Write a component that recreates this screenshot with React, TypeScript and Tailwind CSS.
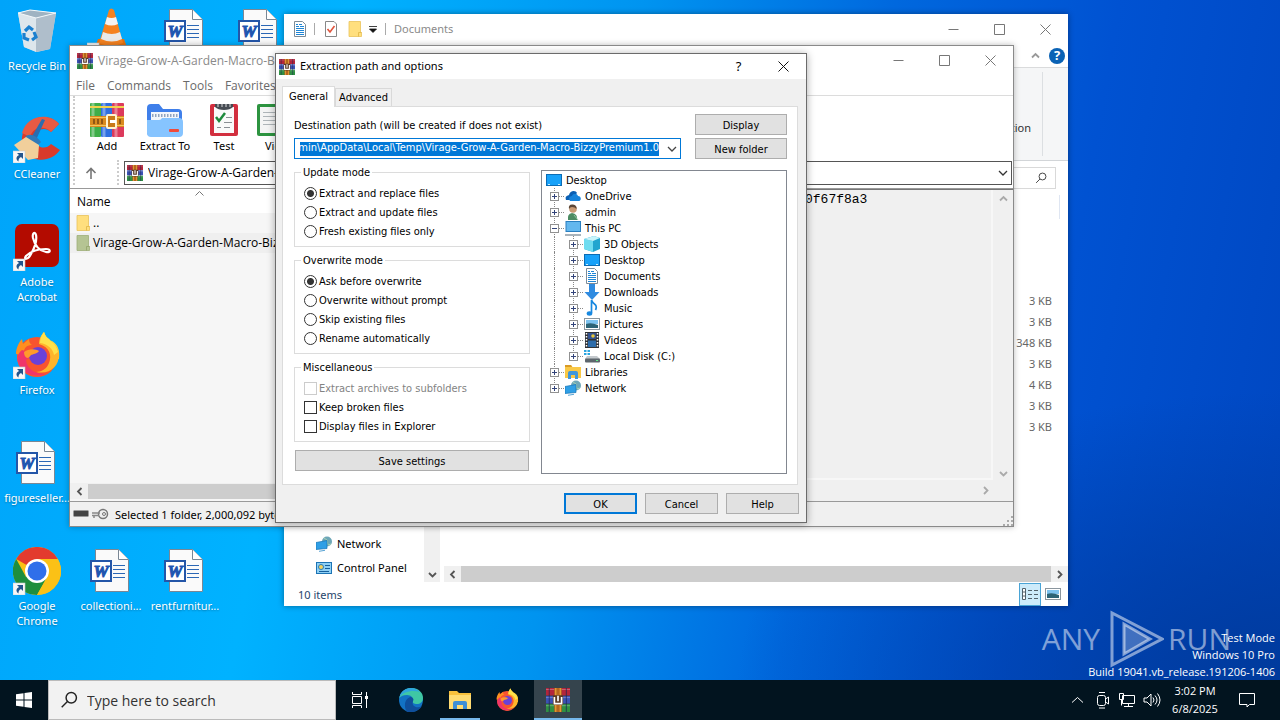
import { useLayoutEffect, useRef, type ReactNode } from "react";

const FULL_NAME = "Virage-Grow-A-Garden-Macro-BizzyPremium1.0";

type IconProps = { className?: string };

/* ---------- shared icons ---------- */

function RarIcon({ className = "size-4" }: IconProps) {
  return (
    <svg viewBox="0 0 16 16" className={className} aria-hidden="true">
      <rect x="0" y="0" width="16" height="5" fill="#b3253b" />
      <rect x="0" y="5.3" width="16" height="5" fill="#3b52b5" />
      <rect x="0" y="10.7" width="16" height="5.3" fill="#2f8f43" />
      <path d="M0 1h16M0 6.4h16M0 11.8h16" stroke="#fff" strokeOpacity=".3" strokeWidth=".6" />
      <path d="M2.2 0v16M13.6 0v16" stroke="#1d2350" strokeOpacity=".6" strokeWidth=".8" />
      <rect x="5.5" y="0" width="5" height="16" fill="#b5651d" />
      <path d="M6.5 0v16M9.5 0v16" stroke="#e8a33a" strokeWidth=".8" />
      <rect x="4.6" y="4.8" width="6.8" height="6.6" rx=".8" fill="#5b3a24" />
      <path d="M5.6 6v4.4h4.8V6M8 5.2v3.6" fill="none" stroke="#fff" strokeWidth="1.1" />
    </svg>
  );
}

function Shortcut() {
  return (
    <g>
      <rect x="0" y="36" width="12" height="12" fill="#f7f7f7" stroke="#c7ccd1" strokeWidth=".6" />
      <path d="M4 38h6v6l-2-2c-1.800 1-2.600 2.400-2.500 4.500C2.600 44.500 3 41.500 6 40z" fill="#23558c" />
    </g>
  );
}

function WordIcon() {
  return (
    <svg viewBox="0 0 48 48" className="size-12" aria-hidden="true">
      <path d="M8.500 2.500H31.500L41.500 12.500V44.500H8.500z" fill="#fafafa" stroke="#7a8794" />
      <path d="M31.500 2.500V12.500H41.500" fill="#fff" stroke="#7a8794" />
      <path d="M26 18.500h12M26 22.500h12M26 26.500h12M26 30.500h12" stroke="#2b67b5" />
      <rect x="4" y="14" width="20" height="20" fill="#fff" stroke="#2456a8" strokeWidth="2" />
      <text x="14" y="30" textAnchor="middle" fontFamily="Liberation Serif, serif" fontWeight="700" fontStyle="italic" fontSize="17" fill="#1f55b0" stroke="#1f55b0">
        W
      </text>
    </svg>
  );
}

function RecycleIcon() {
  return (
    <svg viewBox="0 0 48 48" className="size-12" aria-hidden="true">
      <path d="M5 6l12-3 26 3-6 36-13 3-13-5z" fill="#c9d7e1" />
      <path d="M5 6l18 5v34l-12-5z" fill="#dde6ec" />
      <path d="M23 11L43 6l-6 36-14 3z" fill="#afbecb" />
      <path d="M5 6l12-3 26 3-20 5z" fill="#9fb3c2" stroke="#f4f8fa" />
      <g fill="none" stroke="#1b80cf" strokeWidth="3.200">
        <path d="M12 24l4-4 4 3" />
        <path d="M21 25l2 5-4 3" />
        <path d="M16 33l-5-2 0-5" />
      </g>
    </svg>
  );
}

function VlcIcon() {
  return (
    <svg viewBox="0 0 48 48" className="size-12" aria-hidden="true">
      <path d="M11 32h26l5 14H6z" fill="#e8730f" />
      <path d="M22 3q2-3 5 0l9 33q-12 6-24 0z" fill="#f58220" />
      <path d="M20 10q4.500 2 9 0l2 7q-6.500 3-13 0z" fill="#f3f3f3" />
      <path d="M16 25q9 4 17 0l2 7q-10 5-21 0z" fill="#e9e9e9" />
      <Shortcut />
    </svg>
  );
}

function CCleanerIcon() {
  return (
    <svg viewBox="0 0 48 48" className="size-12" aria-hidden="true">
      <path d="M46 9C36-3 12 0 9 22c-2 24 26 30 38 13l-9-6c-6 7-16 3-16-6s10-12 16-6z" fill="#d93a2b" />
      <path d="M46 9C36-3 14 0 9 18l8 4c3-10 14-12 21-5z" fill="#e85a43" />
      <path d="M29 4l3 1-9 20-5-2z" fill="#2a6db0" />
      <path d="M13 21q7-4 15 6l-4 4-13-6z" fill="#3179b8" />
      <path d="M13 22l13 8-1 13-10 2L1 30z" fill="#f1cf9b" />
      <Shortcut />
    </svg>
  );
}

function AcrobatIcon() {
  return (
    <svg viewBox="0 0 48 48" className="size-12" aria-hidden="true">
      <rect x="2" y="1" width="44" height="43" rx="7" fill="#b30b00" />
      <path
        d="M13 33c-3 4 2 4 5-2 4-7 6-14 5-19-1-4-4-2-3 3 2 8 7 13 13 14 5 1 5-3 0-3-8 0-15 2-20 7z"
        fill="none"
        stroke="#fff"
        strokeWidth="2.200"
      />
      <Shortcut />
    </svg>
  );
}

function FirefoxArt() {
  return (
    <g>
      <path d="M31 1c-4 5-5 8-5 11 12 2 16 8 15 16l5 0c1-9-1-14-7-18-1-1-1 1-1 2-4-4-6-7-7-11z" fill="#ffd83d" />
      <circle cx="24" cy="26" r="20" fill="#f8542f" />
      <path d="M31 1c-4 5-5 8-5 12 11 3 13 12 10 19-2 6-8 9-13 9 14 3 23-6 23-17 0-9-6-11-10-16-3-2-4-4-5-7z" fill="#ffb52b" />
      <path d="M31 1c-3 4-4 7-4 11 8 1 13 6 14 12l4-3c-1-6-5-9-9-13-3-2-4-4-5-7z" fill="#ffe14a" />
      <path d="M3 23c0-6 3-12 6-15l1 5 6-5c0 3 1 5 3 6-6 0-9 4-8 10z" fill="#ff8f1f" />
      <path d="M5 31c4 12 16 16 28 12-10 0-19-4-20-14l8-6-12-4c-4 3-5 8-4 12z" fill="#f0356a" />
      <circle cx="25" cy="25" r="9" fill="#6a41d8" />
      <path d="M11 21c5-4 12-3 15-1-2 3-6 3-8 4-1 1-2 3-4 3-2-1-3-3-3-6z" fill="#ff9a2b" />
    </g>
  );
}

function FirefoxIcon() {
  return (
    <svg viewBox="0 0 48 48" className="size-12" aria-hidden="true">
      <FirefoxArt />
      <Shortcut />
    </svg>
  );
}

function ChromeIcon() {
  return (
    <svg viewBox="0 0 48 48" className="size-12" aria-hidden="true">
      <circle cx="24" cy="24" r="24" fill="#fbc116" />
      <path d="M24 24L3.200 12A24 24 0 0 1 44.800 12z" fill="#e33b2e" />
      <path d="M3.200 12A24 24 0 0 0 24 48l10-18-10-6-11 6z" fill="#1e8e3e" />
      <path d="M24 12h20.800A24 24 0 0 1 24 48l10.400-18z" fill="#fbc116" />
      <circle cx="24" cy="24" r="12" fill="#fff" />
      <circle cx="24" cy="24" r="9.500" fill="#2f6fea" />
      <Shortcut />
    </svg>
  );
}

function FolderIcon({ className = "size-4" }: IconProps) {
  return (
    <svg viewBox="0 0 16 16" className={className} aria-hidden="true">
      <path d="M2 0.500h11.500v10.500l1 .5v4H2z" fill="#ffdf7e" stroke="#eac35a" strokeWidth=".8" />
      <path d="M11.500 15.500v-4h3" fill="none" stroke="#e0b545" strokeWidth=".8" />
    </svg>
  );
}

function DocIcon({ className = "size-4" }: IconProps) {
  return (
    <svg viewBox="0 0 16 16" className={className} aria-hidden="true">
      <path d="M2.500.5H10.500L13.500 3.500V15.500H2.500z" fill="#fff" stroke="#7d8b97" />
      <path d="M4 3.500h2M7 3.500h3M4 5.500h3M8 5.500h4M4 7.500h8M4 9.500h8M4 11.500h8M4 13.500h8" stroke="#1f86d6" />
    </svg>
  );
}

function NetworkIcon() {
  return (
    <svg viewBox="0 0 16 16" className="size-4" aria-hidden="true">
      <circle cx="11" cy="5.500" r="5" fill="#6ea7b8" />
      <path d="M8 2l3 2 1 5 3-1" stroke="#a7d2b3" fill="none" />
      <path d="M0 6.500l11-2v8l-11 1z" fill="#2f9fe6" stroke="#1673b5" strokeWidth=".7" />
      <path d="M3 15.300l6-1" stroke="#57a2d3" />
    </svg>
  );
}

function MonitorIcon() {
  return (
    <svg viewBox="0 0 16 16" className="size-4" aria-hidden="true">
      <rect x=".5" y="2.500" width="15" height="11" fill="#17a1f9" stroke="#0c6cb4" />
      <path d="M2 12.500h2M12 12.500h2" stroke="#c9ecff" />
    </svg>
  );
}

function PicturesIcon() {
  return (
    <svg viewBox="0 0 16 16" className="size-4" aria-hidden="true">
      <rect x=".5" y="2.500" width="15" height="11" fill="#fff" stroke="#8b969e" />
      <rect x="2" y="4" width="12" height="4" fill="#7cc2ef" />
      <path d="M2 8q5-2 12 1v3H2z" fill="#2c6376" />
    </svg>
  );
}

function Search({ className }: IconProps) {
  return (
    <svg viewBox="0 0 16 16" className={className} fill="none" stroke="currentColor" strokeWidth="1.300" aria-hidden="true">
      <circle cx="10" cy="6" r="4.600" />
      <path d="M6.600 9.400L1.500 14.500" />
    </svg>
  );
}

function Arrow({ dir, className = "text-[#555]" }: { dir: "up" | "down" | "left" | "right"; className?: string }) {
  const d = {
    up: "M1 6.500L4.500 3 8 6.500",
    down: "M1 3l3.500 3.500L8 3",
    left: "M6.500 1L3 4.500 6.500 8",
    right: "M3 1l3.500 3.500L3 8",
  }[dir];
  return (
    <svg viewBox="0 0 9 9" className={`size-[9px] shrink-0 ${className}`} fill="none" stroke="currentColor" strokeWidth="1.800" aria-hidden="true">
      <path d={d} />
    </svg>
  );
}

function WindowButtons() {
  return (
    <div className="flex text-[#777]">
      {["M.5 5.500h10", "M.5.5h10v10h-10z", "M.5.5l10 10M10.500.5l-10 10"].map((d, i) => (
        <button key={d} type="button" aria-label={["Minimize", "Maximize", "Close"][i]} className="flex h-[29px] w-[46px] items-center justify-center">
          <svg viewBox="0 0 11 11" className="size-[11px]" fill="none" stroke="currentColor">
            <path d={d} />
          </svg>
        </button>
      ))}
    </div>
  );
}

/* ---------- desktop ---------- */

const shortcuts: { label: string; icon: ReactNode; place: string }[] = [
  { label: "Recycle Bin", icon: <RecycleIcon />, place: "col-start-1 row-start-1" },
  { label: "", icon: <VlcIcon />, place: "col-start-2 row-start-1" },
  { label: "", icon: <WordIcon />, place: "col-start-3 row-start-1" },
  { label: "", icon: <WordIcon />, place: "col-start-4 row-start-1" },
  { label: "CCleaner", icon: <CCleanerIcon />, place: "col-start-1 row-start-2" },
  { label: "Adobe Acrobat", icon: <AcrobatIcon />, place: "col-start-1 row-start-3" },
  { label: "Firefox", icon: <FirefoxIcon />, place: "col-start-1 row-start-4" },
  { label: "figureseller...", icon: <WordIcon />, place: "col-start-1 row-start-5" },
  { label: "Google Chrome", icon: <ChromeIcon />, place: "col-start-1 row-start-6" },
  { label: "collectioni...", icon: <WordIcon />, place: "col-start-2 row-start-6" },
  { label: "rentfurnitur...", icon: <WordIcon />, place: "col-start-3 row-start-6" },
];

function DesktopIcons() {
  return (
    <div className="grid auto-rows-[108px] grid-cols-[repeat(4,74px)]">
      {shortcuts.map((s, i) => (
        <div key={i} className={`flex flex-col items-center gap-[3px] pt-[7px] ${s.place}`}>
          {s.icon}
          <span className="px-[3px] text-center font-['Noto_Sans',sans-serif] text-[11px] leading-[15px] text-white [text-shadow:0_1px_2px_#0005]">{s.label}</span>
        </div>
      ))}
    </div>
  );
}

function Watermark() {
  return (
    <div className="absolute right-[5px] bottom-0 text-right text-[11px] leading-[17px] text-white">
      <div className="absolute right-[44px] bottom-3 flex items-center text-[30px] leading-none text-white/50">
        <span>ANY</span>
        <svg viewBox="0 0 56 58" className="mr-1 ml-2 h-[58px] w-14" fill="none" stroke="currentColor" strokeWidth="3" aria-hidden="true">
          <path d="M4 3v52l50-26z" />
          <path d="M16 14v30l26-15z" fill="currentColor" fillOpacity=".5" />
        </svg>
        <span>RUN</span>
      </div>
      <p>Test Mode</p>
      <p>Windows 10 Pro</p>
      <p>Build 19041.vb_release.191206-1406</p>
    </div>
  );
}

/* ---------- file explorer ---------- */

const sizes = ["", "", "", "3 KB", "3 KB", "348 KB", "3 KB", "4 KB", "3 KB", "3 KB"];

function ExplorerWindow() {
  return (
    <section className="absolute top-[14px] left-[284px] flex h-[592px] w-[784px] flex-col bg-white font-['Noto_Sans',sans-serif] text-[11px] shadow-[0_0_6px_#0006]">
      <header className="flex h-[30px] items-center pl-2">
        <DocIcon />
        <span className="mr-2 ml-[6px] h-3 w-px bg-[#aaa]" />
        <svg viewBox="0 0 16 16" className="size-4" aria-hidden="true">
          <path d="M2.500.5H11L13.500 3V15.500H2.500z" fill="#fff" stroke="#888" />
          <path d="M4.500 8l2.500 3 4.500-6" fill="none" stroke="#e0533b" strokeWidth="1.600" />
        </svg>
        <FolderIcon className="ml-2 size-4" />
        <svg viewBox="0 0 8 7" className="ml-[6px] h-[7px] w-2" aria-hidden="true">
          <path d="M0 .5h8M.5 3h7L4 6.500z" stroke="#111" fill="#111" strokeWidth=".8" />
        </svg>
        <span className="mx-2 h-3 w-px bg-[#aaa]" />
        <h2 className="flex-1 pt-px text-[#8a8a8a]">Documents</h2>
        <WindowButtons />
      </header>
      <div className="flex h-6 items-center justify-end gap-[9px] border-b border-[#dadbdc] pr-[3px]">
        <Arrow dir="up" className="text-[#999]" />
        <span className="flex size-4 items-center justify-center rounded-full bg-[#0a62b5] text-[13px] leading-none font-bold text-white">?</span>
      </div>
      <div className="flex h-[93px] justify-end border-b border-[#d2d5d8] bg-[#f5f6f7] py-1 pr-[25px]">
        <span className="flex items-center border-r border-[#dcdfe2] pt-[28px] pr-[11px] text-[#333]">Invert selection</span>
      </div>
      <div className="flex justify-end pt-[6px] pb-[2px] pr-3">
        <label className="flex h-[22px] w-52 items-center border border-[#d9d9d9] pr-2">
          <input aria-label="Search Documents" className="min-w-0 flex-1" />
          <Search className="size-3 text-[#444]" />
        </label>
      </div>
      <div className="flex min-h-0 flex-1">
        <nav className="flex w-[140px] flex-col justify-end gap-2 pb-[6px] pl-8">
          <a href="#network" className="flex h-4 items-center gap-[5px]">
            <NetworkIcon />
            Network
          </a>
          <a href="#control" className="flex h-4 items-center gap-[5px] whitespace-nowrap">
            <svg viewBox="0 0 16 16" className="size-4 shrink-0" aria-hidden="true">
              <rect x=".5" y="2.500" width="15" height="11" fill="#8fd0f5" stroke="#1c74b5" />
              <circle cx="5" cy="7" r="2.500" fill="#f4d35e" stroke="#2c7db8" />
              <path d="M9 5.500h5M9 8.500h5M3 11.500h10" stroke="#165f9c" />
            </svg>
            Control Panel
          </a>
        </nav>
        <div className="flex w-4 items-end justify-center bg-[#f0f0f0] pb-[3px]">
          <Arrow dir="down" />
        </div>
        <div className="ml-1 flex min-w-0 flex-1 flex-col">
          <div className="flex h-9 justify-end pt-1 pr-2">
            <span className="h-6 w-px bg-[#dfe6f2]" />
          </div>
          <ul className="flex-1 pr-4 text-right text-[#666]">
            {sizes.map((s, i) => (
              <li key={i} className="h-[21px] leading-[21px]">
                {s}
              </li>
            ))}
          </ul>
          <div className="flex h-4 items-center gap-1 bg-[#f0f0f0] px-1">
            <Arrow dir="left" />
            <span className="h-4 flex-1 bg-[#cdcdcd]" />
            <Arrow dir="right" />
          </div>
        </div>
      </div>
      <footer className="flex h-6 items-center justify-between pr-[7px] pl-[14px] text-[#26456b]">
        <span className="pt-[2px]">10 items</span>
        <div className="flex items-center gap-1">
          <button type="button" aria-label="Details" className="flex h-[23px] w-[22px] items-center justify-center border border-[#4aa4d6] bg-[#cdebfa]">
            <svg viewBox="0 0 16 12" className="h-3 w-4" stroke="#52616b" aria-hidden="true">
              <path d="M.5.5h3v11h-3zM.5 4h3M.5 8h3M6 2.500h4M12 2.500h4M6 6.500h4M12 6.500h4M6 10.500h4M12 10.500h4" fill="#fff" />
            </svg>
          </button>
          <button type="button" aria-label="Large icons">
            <PicturesIcon />
          </button>
        </div>
      </footer>
    </section>
  );
}

/* ---------- WinRAR main window ---------- */

const tools: { label: string; width: string; icon: ReactNode }[] = [
  {
    label: "Add",
    width: "w-[58px]",
    icon: (
      <svg viewBox="0 0 34 34" className="size-[34px]" aria-hidden="true">
        <rect x="0" y="0" width="11" height="34" rx="1" fill="#3fae49" />
        <rect x="11" y="0" width="11" height="34" rx="1" fill="#2f6fe0" />
        <rect x="22" y="0" width="12" height="34" rx="1" fill="#dc3a5c" />
        <path d="M3 0v34M14 0v34M26 0v34" stroke="#fff" strokeOpacity=".35" strokeWidth="3" />
        <path d="M0 4h34" stroke="#f2d24b" strokeWidth="2" />
        <rect x="0" y="13" width="34" height="11" fill="#d98a1f" />
        <path d="M0 14.500h34M0 22.500h34" stroke="#f5c55a" />
        <path d="M4 16v5M8 16v5M12 16v5M30 16v5" stroke="#7a4710" strokeWidth="1.500" />
        <rect x="17" y="12" width="9" height="13" rx="1" fill="#c87a18" stroke="#fff3cf" strokeWidth="2" />
        <path d="M20 18.500h6" stroke="#fff" strokeWidth="3" />
      </svg>
    ),
  },
  {
    label: "Extract To",
    width: "w-[58px]",
    icon: (
      <svg viewBox="0 0 36 34" className="h-[34px] w-9" aria-hidden="true">
        <path d="M0 5q0-4 4-4h8l4 5h15q4 0 4 4v19q0 4-4 4H4q-4 0-4-4z" fill="#3f7fea" />
        <rect x="4" y="9" width="28" height="14" fill="#f3f6fb" />
        <path d="M5 12.500h26" stroke="#92a4be" strokeWidth="3" strokeDasharray="1.500 1.500" />
        <path d="M0 17h12q2 0 3-2h17q4 0 4 4v11q0 4-4 4H4q-4 0-4-4z" fill="#86c4ff" />
        <rect x="22" y="26" width="10" height="3" rx="1" fill="#f04a3a" />
      </svg>
    ),
  },
  {
    label: "Test",
    width: "w-[60px]",
    icon: (
      <svg viewBox="0 0 28 34" className="h-[34px] w-7" aria-hidden="true">
        <rect x="0" y="1" width="28" height="32" rx="2" fill="#d22f3f" />
        <rect x="4" y="4" width="20" height="26" fill="#fafafa" />
        <path d="M5 1h18v3q-3 3-9 3T5 4z" fill="#454b52" />
        <path d="M8 1v3M12 1v3M16 1v3M20 1v3" stroke="#ddd" />
        <path d="M6 14l3 4 6-8" fill="none" stroke="#1e8a3c" strokeWidth="2.500" />
        <path d="M16 14.500h6M14 19.500h8M7 24.500h4M14 24.500h6" stroke="#8a8f94" />
      </svg>
    ),
  },
  {
    label: "View",
    width: "w-[46px]",
    icon: (
      <svg viewBox="0 0 40 34" className="h-[34px] w-10" aria-hidden="true">
        <rect x="0" y="1" width="40" height="32" rx="2" fill="#2d9440" />
        <path d="M3 4h17v26H3zM21 4h16v26H21z" fill="#f4f4f4" />
        <path d="M6 9.500h12M6 13.500h12M6 17.500h12M6 21.500h12" stroke="#aeb4b8" />
      </svg>
    ),
  },
];

function WinrarWindow() {
  return (
    <section className="absolute top-[45px] left-[69px] flex h-[482px] w-[945px] flex-col border border-[#8a8a8a] bg-white text-[12px] shadow-[0_0_6px_#0004]">
      <header className="flex h-[29px] items-center pl-[7px]">
        <RarIcon />
        <h2 className="ml-[5px] flex-1 text-[#8a8a8a]">{FULL_NAME}</h2>
        <WindowButtons />
      </header>
      <nav className="flex h-[21px] items-center gap-3 border-b border-[#dcdcdc] pt-px pl-[6px] text-[#6a6a6a]">
        {["File", "Commands", "Tools", "Favorites", "Options", "Help"].map((m) => (
          <a key={m} href={`#${m}`}>
            {m}
          </a>
        ))}
      </nav>
      <div className="flex h-16 pl-[3px]">
        <span className="border-l-2 border-dotted border-[#ccc]" />
        <div className="flex pt-[7px] pl-[3px]">
          {tools.map((t) => (
            <button key={t.label} type="button" className={`flex flex-col items-center gap-px font-['Noto_Sans',sans-serif] text-[11px] whitespace-nowrap ${t.width}`}>
              {t.icon}
              <span className="leading-4">{t.label}</span>
            </button>
          ))}
        </div>
      </div>
      <div className="flex h-[29px] items-center border-b border-[#999] pr-px pb-[3px] pl-[3px]">
        <span className="h-full border-l-2 border-dotted border-[#ccc]" />
        <button type="button" aria-label="Up" className="flex w-[31px] justify-center">
          <svg viewBox="0 0 12 12" className="size-3" fill="none" stroke="#777" strokeWidth="1.600" aria-hidden="true">
            <path d="M6 12V1.500M1.500 6L6 1.500 10.500 6" />
          </svg>
        </button>
        <span className="ml-[11px] h-full border-l-2 border-dotted border-[#ccc]" />
        <label className="relative ml-[5px] flex h-6 flex-1 items-center border border-[#555] pl-[2px]">
          <RarIcon />
          <select aria-label="Archive path" className="ml-[5px] flex-1 appearance-none">
            <option>{FULL_NAME}</option>
          </select>
          <svg viewBox="0 0 10 6" className="mr-[3px] h-[6px] w-[10px]" fill="none" stroke="#333" strokeWidth="1.300" aria-hidden="true">
            <path d="M1 1l4 4 4-4" />
          </svg>
        </label>
      </div>
      <div className="flex min-h-0 flex-1">
        <div className="flex w-[720px] flex-col bg-[#f6f6f6]">
          <table className="w-full text-left">
            <thead>
              <tr className="h-6 bg-white">
                <th className="relative pt-px pl-[7px] font-normal">
                  <svg viewBox="0 0 9 5" className="absolute top-[2px] left-[125px] h-[5px] w-[9px]" fill="none" stroke="#777" aria-hidden="true">
                    <path d="M.5 4.500l4-4 4 4" />
                  </svg>
                  Name
                </th>
              </tr>
            </thead>
            <tbody>
              <tr className="h-5">
                <td className="pl-[5px]">
                  <span className="flex items-center gap-[2px]">
                    <FolderIcon />
                    ..
                  </span>
                </td>
              </tr>
              <tr className="h-5 bg-[#efefef]">
                <td className="pl-[5px]">
                  <span className="flex items-center gap-[2px]">
                    <FolderIcon className="size-4 hue-rotate-30 saturate-50 brightness-85" />
                    {FULL_NAME}
                  </span>
                </td>
              </tr>
            </tbody>
          </table>
          <div className="mt-auto mb-[2px] flex h-4 items-center gap-1 bg-[#f0f0f0] pl-[5px]">
            <Arrow dir="left" />
            <span className="h-[15px] flex-1 bg-[#cdcdcd]" />
          </div>
        </div>
        <div className="flex min-w-0 flex-1 flex-col border-t border-[#777] bg-[#f0f0f0]">
          <div className="flex min-h-0 flex-1">
            <p className="min-w-0 flex-1 border-r-2 border-b-2 border-[#f7f7f7] pt-[2px] pl-[15px] font-['Liberation_Mono',monospace] text-[13px] leading-4">0f67f8a3</p>
            <div className="flex w-[20px] flex-col items-center justify-between pt-1 pb-[2px]">
              <Arrow dir="up" className="text-[#aaa]" />
              <Arrow dir="down" className="text-[#aaa]" />
            </div>
          </div>
          <div className="flex h-[21px] items-center justify-end pr-[23px]">
            <Arrow dir="right" className="text-[#aaa]" />
          </div>
        </div>
      </div>
      <footer className="flex h-[25px] items-center border-t border-[#999] bg-[#f0f0f0] pl-[3px]">
        <svg viewBox="0 0 36 12" className="h-3 w-9" aria-hidden="true">
          <rect x=".5" y="2.500" width="15" height="6" rx="1" fill="#444" stroke="#999" />
          <circle cx="30" cy="6" r="4.500" fill="#eee" stroke="#777" strokeWidth="1.500" />
          <circle cx="31" cy="6" r="1.500" fill="none" stroke="#777" />
          <path d="M19 5h8M19 7.500h7M21 8v2" stroke="#888" strokeWidth="1.500" />
        </svg>
        <span className="ml-[6px] flex-1 pt-[3px] font-['Noto_Sans',sans-serif] text-[11px] whitespace-nowrap">Selected 1 folder, 2,000,092 bytes</span>
        <svg viewBox="0 0 10 10" className="size-[10px] self-end" fill="#aaa" aria-hidden="true">
          <path d="M0 8h2v2H0zM4 8h2v2H4zM8 8h2v2H8zM4 4h2v2H4zM8 4h2v2H8zM8 0h2v2H8z" />
        </svg>
      </footer>
    </section>
  );
}

/* ---------- extraction dialog ---------- */

function PushButton({ children, className = "border-[#adadad]" }: { children: ReactNode; className?: string }) {
  return (
    <button type="button" className={`h-[21px] border bg-[#e1e1e1] pt-px leading-none ${className}`}>
      {children}
    </button>
  );
}

type Choice = { label: string; checked?: boolean; disabled?: boolean };

function Group({ title, type, items }: { title: string; type: "radio" | "checkbox"; items: Choice[] }) {
  const box =
    type === "radio"
      ? "rounded-full border-[#333] checked:bg-[radial-gradient(circle,#333_0_3px,#fff_4px)]"
      : "border-[#333] disabled:border-[#ccc]";
  return (
    <fieldset className="border border-[#dcdcdc] pt-[5px] pb-[5px] pl-[9px]">
      <legend className="-ml-[3px] h-[14px] px-[2px] leading-4">{title}</legend>
      {items.map((it) => (
        <label key={it.label} className={`flex h-[19px] items-center gap-[2px] leading-[19px] ${it.disabled ? "text-[#838383]" : ""}`}>
          <input type={type} name={title} defaultChecked={it.checked} disabled={it.disabled} className={`size-[13px] appearance-none border bg-white ${box}`} />
          <span>{it.label}</span>
        </label>
      ))}
    </fieldset>
  );
}

type Node = { label: string; level: 0 | 1 | 2; icon: ReactNode; open?: boolean; last?: boolean };

const tree: Node[] = [
  { label: "Desktop", level: 0, icon: <MonitorIcon /> },
  {
    label: "OneDrive",
    level: 1,
    icon: (
      <svg viewBox="0 0 16 16" className="size-4" aria-hidden="true">
        <path d="M1 12c-1-3 0-4 3-5 1-5 7-5 8-2l-6 7z" fill="#0a5fb4" />
        <path d="M5 13c-2-3 0-5 2-5 1-3 5-3 6 0 3 0 4 4 1 5z" fill="#1683db" />
      </svg>
    ),
  },
  {
    label: "admin",
    level: 1,
    icon: (
      <svg viewBox="0 0 16 16" className="size-4" aria-hidden="true">
        <path d="M3 16q-1-6 4-7 6 1 5 7z" fill="#4c8b62" />
        <circle cx="8" cy="5" r="3.800" fill="#c99a74" />
        <path d="M4 5Q3 0 8 .5 12 1 11.500 5 10 3 7 3q-2 0-3 2z" fill="#5b4636" />
        <path d="M9 11l4 5" stroke="#8ec2a0" />
      </svg>
    ),
  },
  {
    label: "This PC",
    level: 1,
    open: true,
    icon: (
      <svg viewBox="0 0 16 16" className="size-4" aria-hidden="true">
        <rect x="1" y="1.500" width="14.500" height="10" fill="#63b7ee" stroke="#2a7fc0" />
        <path d="M0 15h16" stroke="#8c9aa5" strokeWidth="1.500" />
      </svg>
    ),
  },
  {
    label: "3D Objects",
    level: 2,
    icon: (
      <svg viewBox="0 0 16 16" className="size-4" aria-hidden="true">
        <path d="M0 3l10-3 6 2v11l-7 3-9-3z" fill="#22a5cf" />
        <path d="M0 3l9 2v11l-9-3z" fill="#6fdcf0" />
        <path d="M0 3l10-3 6 2-7 3z" fill="#c8f4fa" />
      </svg>
    ),
  },
  { label: "Desktop", level: 2, icon: <MonitorIcon /> },
  { label: "Documents", level: 2, icon: <DocIcon /> },
  {
    label: "Downloads",
    level: 2,
    icon: (
      <svg viewBox="0 0 16 16" className="size-4" aria-hidden="true">
        <path d="M5 0h6v8h4.500L8 16 .5 8H5z" fill="#2f8be0" />
      </svg>
    ),
  },
  {
    label: "Music",
    level: 2,
    icon: (
      <svg viewBox="0 0 16 16" className="size-4" aria-hidden="true">
        <path d="M7.500 13V0q1 3 4 5 1.500 2 0 5" fill="none" stroke="#1788e0" strokeWidth="1.700" />
        <ellipse cx="5.500" cy="13.500" rx="2.800" ry="2.200" fill="#1788e0" />
      </svg>
    ),
  },
  { label: "Pictures", level: 2, icon: <PicturesIcon /> },
  {
    label: "Videos",
    level: 2,
    icon: (
      <svg viewBox="0 0 16 16" className="size-4" aria-hidden="true">
        <rect x="1" y="0" width="14" height="16" fill="#2f3237" />
        <path d="M2.500 1v15M13.500 1v15" stroke="#fff" strokeWidth="1.500" strokeDasharray="1.500 1.500" />
        <rect x="4" y="1" width="8" height="6" fill="#33518f" />
        <rect x="4" y="8.500" width="8" height="6.500" fill="#2c6cab" />
        <circle cx="9" cy="4" r="1.800" fill="#e6c63b" />
      </svg>
    ),
  },
  {
    label: "Local Disk (C:)",
    level: 2,
    last: true,
    icon: (
      <svg viewBox="0 0 16 16" className="size-4" aria-hidden="true">
        <path d="M0 2h2.500v2H0zM3.500 2H6v2H3.500zM0 5h2.500v2H0zM3.500 5H6v2H3.500z" fill="#2aa5e0" />
        <path d="M3 8h10l3 3H1z" fill="#c4c9cd" />
        <rect x="1" y="10.500" width="15" height="4" rx="1" fill="#5d666d" />
        <path d="M12 12.500h2" stroke="#5ff08a" />
      </svg>
    ),
  },
  {
    label: "Libraries",
    level: 1,
    icon: (
      <svg viewBox="0 0 16 16" className="size-4" aria-hidden="true">
        <path d="M0 1h6l1.500 2H16v11H0z" fill="#f9c846" />
        <path d="M0 1h6l1 2H0z" fill="#d99a25" />
        <path d="M3 15V9q0-2 2-2h6q2 0 2 2v6h-3v-4H6v4z" fill="#3f97dc" />
      </svg>
    ),
  },
  { label: "Network", level: 1, last: true, icon: <NetworkIcon /> },
];

function Expander({ open, last }: { open?: boolean; last?: boolean }) {
  return (
    <svg viewBox="0 0 15 16" className="h-4 w-[15px] shrink-0" fill="none" aria-hidden="true">
      <path d={last ? "M4.500 0v8M9 8.500h6" : "M4.500 0v16M9 8.500h6"} stroke="#888" strokeDasharray="1 1" />
      <rect x=".5" y="4.500" width="8" height="8" fill="#fff" stroke="#919191" />
      <path d={open ? "M2 8.500h5" : "M2 8.500h5M4.500 6v5"} stroke="#33447a" />
    </svg>
  );
}

function FolderTree() {
  return (
    <ul className="mt-[5px] flex-1 border border-[#828790] bg-white pt-px pl-1">
      {tree.map((n, i) => (
        <li key={i} className="flex h-4 items-center">
          {n.level === 2 && <span className="ml-1 h-4 w-[5px] border-r border-dotted border-[#888]" />}
          {n.level === 2 && <span className="w-[14px]" />}
          {n.level === 1 && <span className="w-1" />}
          {n.level > 0 && <Expander open={n.open} last={n.last} />}
          {n.icon}
          <span className="ml-1 pt-[2px] leading-4">{n.label}</span>
        </li>
      ))}
    </ul>
  );
}

function ExtractDialog() {
  const pathRef = useRef<HTMLInputElement>(null);

  // keep the end of a long path in view
  useLayoutEffect(() => {
    const el = pathRef.current;
    if (el) el.scrollLeft = el.scrollWidth;
  }, []);

  return (
    <section
      role="dialog"
      aria-label="Extraction path and options"
      className="absolute top-[53px] left-[275px] w-[532px] border border-[#6b6b6b] bg-[#f0f0f0] font-['DejaVu_Sans_Condensed','Open_Sans',sans-serif] text-[11px] shadow-[0_1px_8px_#0005]"
    >
      <header className="flex h-[25px] items-center bg-white pl-[3px] font-['Noto_Sans',sans-serif]">
        <RarIcon />
        <h1 className="ml-[5px] flex-1">Extraction path and options</h1>
        <button type="button" aria-label="Help" className="w-[45px] text-[13px]">
          ?
        </button>
        <button type="button" aria-label="Close" className="flex h-full w-[45px] items-center justify-center">
          <svg viewBox="0 0 11 11" className="size-[11px]" stroke="#111" aria-hidden="true">
            <path d="M.5.5l10 10M10.500.5l-10 10" />
          </svg>
        </button>
      </header>
      <div className="pt-[7px] pr-[8px] pl-[6px]">
        <div role="tablist" className="flex items-end">
          <button type="button" role="tab" aria-selected="true" className="z-10 -mb-px h-[21px] w-[53px] border border-b-0 border-[#dcdcdc] bg-white">
            General
          </button>
          <button type="button" role="tab" aria-selected="false" className="h-[18px] w-[57px] border border-b-0 border-[#d9d9d9] bg-[#f0f0f0] pt-px">
            Advanced
          </button>
        </div>
        <div role="tabpanel" className="border border-[#dcdcdc] bg-white pt-[7px] pr-[10px] pb-[10px] pl-[11px]">
          <div className="flex gap-[14px]">
            <div className="flex flex-1 flex-col">
              <label htmlFor="dest" className="h-6 leading-6 whitespace-nowrap">
                Destination path (will be created if does not exist)
              </label>
              <div className="flex h-[21px] items-center border border-[#0078d7] bg-white pl-[5px]">
                <input
                  id="dest"
                  ref={pathRef}
                  defaultValue="dmin\AppData\Local\Temp\Virage-Grow-A-Garden-Macro-BizzyPremium1.0"
                  className="h-[14px] min-w-0 flex-1 bg-[#0078d7] text-white outline-none"
                />
                <svg viewBox="0 0 10 6" className="mr-[3px] ml-[8px] h-[6px] w-[10px]" fill="none" stroke="#444" strokeWidth="1.300" aria-hidden="true">
                  <path d="M1 1l4 4 4-4" />
                </svg>
              </div>
            </div>
            <div className="flex w-[92px] flex-col gap-[3px]">
              <PushButton>Display</PushButton>
              <PushButton>New folder</PushButton>
            </div>
          </div>
          <div className="mt-[6px] flex gap-[11px]">
            <div className="flex w-[236px] flex-col gap-[6px]">
              <Group
                title="Update mode"
                type="radio"
                items={[
                  { label: "Extract and replace files", checked: true },
                  { label: "Extract and update files" },
                  { label: "Fresh existing files only" },
                ]}
              />
              <Group
                title="Overwrite mode"
                type="radio"
                items={[
                  { label: "Ask before overwrite", checked: true },
                  { label: "Overwrite without prompt" },
                  { label: "Skip existing files" },
                  { label: "Rename automatically" },
                ]}
              />
              <Group
                title="Miscellaneous"
                type="checkbox"
                items={[
                  { label: "Extract archives to subfolders", disabled: true },
                  { label: "Keep broken files" },
                  { label: "Display files in Explorer" },
                ]}
              />
              <PushButton className="mx-px mt-[2px] mb-[3px] border-[#adadad]">Save settings</PushButton>
            </div>
            <FolderTree />
          </div>
        </div>
      </div>
      <footer className="flex justify-end gap-2 pt-2 pr-[7px] pb-2">
        <PushButton className="w-[73px] border-[#0078d7] ring-1 ring-[#0078d7] ring-inset">OK</PushButton>
        <PushButton className="w-[73px] border-[#adadad]">Cancel</PushButton>
        <PushButton className="w-[73px] border-[#adadad]">Help</PushButton>
      </footer>
    </section>
  );
}

/* ---------- taskbar ---------- */

function Taskbar() {
  return (
    <footer className="flex h-10 items-center bg-[#02141f] text-white">
      <button type="button" aria-label="Start" className="flex w-12 justify-center">
        <svg viewBox="0 0 16 16" className="size-4" fill="#fff" aria-hidden="true">
          <path d="M0 2.300l7.500-1v6.200H0zM8.500 1.100L16 0v7.500H8.500zM0 8.500h7.500v6.200L0 13.700zM8.500 8.500H16V16l-7.500-1.100z" />
        </svg>
      </button>
      <label className="flex h-10 w-72 items-center border border-[#bbb] bg-[#f2f2f2] pl-[11px] text-[#222]">
        <Search className="size-[18px]" />
        <input placeholder="Type here to search" aria-label="Search" className="ml-[9px] min-w-0 flex-1 text-[14px] placeholder:text-[#333]" />
      </label>
      <button type="button" aria-label="Task View" className="flex w-12 justify-center">
        <svg viewBox="0 0 18 16" className="h-4 w-[18px]" fill="none" stroke="#fff" aria-hidden="true">
          <path d="M1.500 0v2.500h9V0M1.500 16v-2.500h9V16M1.500 4.500h9v7h-9zM15.500 0v16" />
          <path d="M15.500 4v3" strokeWidth="3" />
        </svg>
      </button>
      <button type="button" aria-label="Edge" className="flex w-[54px] justify-center">
        <svg viewBox="0 0 24 24" className="size-6" aria-hidden="true">
          <circle cx="12" cy="12" r="12" fill="#1272c4" />
          <path d="M.3 10C2 2 9 0 12 0c8 0 12 5 12 10 0 4-3 6-6 6s-5-1-4-3c1-3-2-6-6-6-4 0-6 1-7.700 3z" fill="#3fc7a4" />
          <path d="M.3 10C2 2 8 0 12 0c4 0 7 2 9 4C14 2 4 3 .3 10z" fill="#2ea6dc" />
          <path d="M8 24C4 18 6 10 12 9c2 1 3 2 2 4-2 5 4 8 9 5-3 5-9 7-15 6z" fill="#0f4f9c" />
        </svg>
      </button>
      <button type="button" aria-label="File Explorer" className="ml-[2px] flex h-full w-10 items-center justify-center border-b-2 border-[#76b9ed] pt-[2px]">
        <svg viewBox="0 0 22 18" className="h-[18px] w-[22px]" aria-hidden="true">
          <path d="M0 0h8l2 2h12v16H0z" fill="#f8c13c" />
          <path d="M0 4h22v14H0z" fill="#ffdc72" />
          <path d="M4 18v-6q0-2 2-2h10q2 0 2 2v6h-4v-4H8v4z" fill="#3d8fd6" />
        </svg>
      </button>
      <button type="button" aria-label="Firefox" className="flex w-[54px] justify-center">
        <svg viewBox="0 0 48 48" className="size-6" aria-hidden="true">
          <FirefoxArt />
        </svg>
      </button>
      <button type="button" aria-label="WinRAR" className="flex h-full w-12 items-center justify-center border-b-2 border-[#76b9ed] bg-[#35444d] pt-[2px]">
        <RarIcon className="size-6" />
      </button>
      <div className="ml-auto flex items-center">
        <svg viewBox="0 0 90 18" className="h-[18px] w-[90px]" fill="none" stroke="#fff" aria-hidden="true">
          <path d="M1 11.500l5.500-5 5.500 5" />
          <path d="M28.500 4.500h4q2 0 2 2v6q0 2-2 2h-4q-2 0-2-2v-6q0-2 2-2zM34.500 8l3-2v7l-3-2M28 1.500h6M28 17h6" />
          <path d="M51.500 4.500h12v8h-12zM57.500 12.500v3M53 15.500h9M48.500 2.500h4v6h-4zM50.500 8.500v6" />
          <path d="M73 7h3l4-4v12l-4-4h-3zM82 6.500q2 2.500 0 5M84 4.500q4 4.500 0 9M86.500 2.500q5 6.500 0 13" />
        </svg>
        <div className="w-[68px] text-center text-[11px] leading-[18px]">
          <p>3:02 PM</p>
          <p>6/8/2025</p>
        </div>
        <button type="button" aria-label="Notifications" className="mr-[25px] ml-[10px]">
          <svg viewBox="0 0 16 16" className="size-4" fill="none" stroke="#fff" aria-hidden="true">
            <path d="M.5 1.500h15v11h-5l-2.500 2.500v-2.500H.5z" />
          </svg>
        </button>
      </div>
    </footer>
  );
}

export default function App() {
  return (
    <div className="flex min-h-screen flex-col overflow-hidden font-['Open_Sans','Noto_Sans',sans-serif] text-black">
      <main className="relative flex-1 bg-[radial-gradient(ellipse_at_100%_100%,#003a9c_0%,#003a9c00_30%),linear-gradient(100deg,#00a4fa_0%,#00b2ff_25%,#0094f0_46%,#0068de_64%,#0052d2_80%,#0046c0_100%)]">
        <DesktopIcons />
        <Watermark />
        <ExplorerWindow />
        <WinrarWindow />
        <ExtractDialog />
      </main>
      <Taskbar />
    </div>
  );
}
